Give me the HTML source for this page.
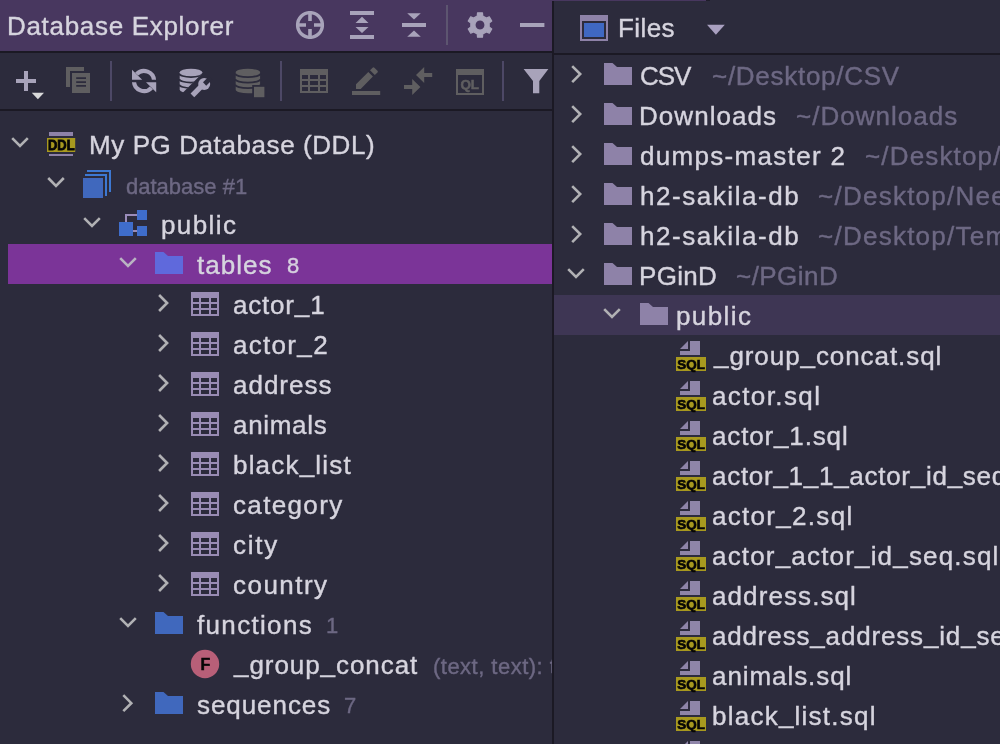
<!DOCTYPE html>
<html><head><meta charset="utf-8"><title>Database Explorer</title>
<style>
html,body{margin:0;padding:0;background:#2c2b3c;}
body{width:1000px;height:744px;position:relative;overflow:hidden;font-family:"Liberation Sans",sans-serif;}
.t i{font-style:normal;position:relative;top:-2px;}
.t{position:absolute;white-space:pre;line-height:40px;height:40px;-webkit-text-stroke:0.4px currentColor;will-change:transform;}
svg text{font-family:"Liberation Sans",sans-serif;}
#left{position:absolute;left:0;top:0;width:552px;height:744px;overflow:hidden;background:#2c2b3c;}
#lhdr{position:absolute;left:0;top:0;width:552px;height:51px;background:#48375f;}
#topstrip{position:absolute;left:0;top:0;width:706px;height:1px;background:#48375f;}
#topstrip2{position:absolute;left:706px;top:0;width:4px;height:1px;background:#1f1d2b;}
.hl{position:absolute;left:0;width:552px;height:2px;background:#1b1924;}
#lsel{position:absolute;left:8px;top:244px;width:544px;height:40px;background:#7b3498;}
#vline{position:absolute;left:552px;top:1px;width:2px;height:743px;background:#1b1924;}
#right{position:absolute;left:554px;top:1px;width:446px;height:743px;overflow:hidden;background:#2c2b3c;}
#rin{position:absolute;left:0;top:-1px;width:446px;height:744px;}
#rsel{position:absolute;left:0;top:295px;width:446px;height:40px;background:#3e3654;}
#rline{position:absolute;left:0;top:53px;width:446px;height:2px;background:#1b1924;}
svg{position:absolute;left:0;top:0;will-change:transform;}
</style></head><body>
<div id="topstrip"></div><div id="topstrip2"></div>
<div id="left">
<div id="lhdr"></div>
<div class="hl" style="top:51px"></div>
<div class="hl" style="top:109px"></div>
<div id="lsel"></div>
<svg width="552" height="744" viewBox="0 0 552 744"><defs><clipPath id="cw"><path d="M170,60 H215.6 L180,95.6 H170 Z"/></clipPath><clipPath id="ct"><rect x="128" y="60" width="32" height="19.7"/></clipPath><clipPath id="cb"><rect x="128" y="82.3" width="32" height="20"/></clipPath></defs><circle cx="310" cy="25" r="12.4" fill="none" stroke="#a8a3ba" stroke-width="3.4"/><path d="M296,25 H306 M314,25 H324 M310,11 V21 M310,29 V39" stroke="#a8a3ba" stroke-width="3.6" fill="none"/><rect x="350" y="11" width="24" height="4" fill="#a8a3ba"/><rect x="350" y="35" width="24" height="4" fill="#a8a3ba"/><path d="M362,16.8 L368.5,23 H355.5 Z M362,33 L368.5,27 H355.5 Z" fill="#a8a3ba"/><rect x="402" y="23" width="24" height="4" fill="#a8a3ba"/><path d="M414,19.6 L420.8,13.2 H407.2 Z M414,30.4 L420.8,36.8 H407.2 Z" fill="#a8a3ba"/><rect x="446" y="5" width="2" height="40" fill="#5d5570"/><path d="M477.25,16.01 L477.53,12.85 L482.47,12.85 L482.75,16.01 L486.41,18.13 L489.29,16.78 L491.76,21.07 L489.16,22.89 L489.16,27.11 L491.76,28.93 L489.29,33.22 L486.41,31.87 L482.75,33.99 L482.47,37.15 L477.53,37.15 L477.25,33.99 L473.59,31.87 L470.71,33.22 L468.24,28.93 L470.84,27.11 L470.84,22.89 L468.24,21.07 L470.71,16.78 L473.59,18.13 Z M485.05,25 A5.05,5.05 0 1,0 474.95,25 A5.05,5.05 0 1,0 485.05,25 Z" fill="#a8a3ba" fill-rule="evenodd" stroke="#a8a3ba" stroke-width="1.2" stroke-linejoin="round"/><rect x="520" y="23" width="24.4" height="4" fill="#a8a3ba"/><rect x="16" y="79" width="20" height="4" fill="#a8a3ba"/><rect x="24" y="71" width="4" height="20" fill="#a8a3ba"/><path d="M31.8,92.8 H44 L37.9,99.2 Z" fill="#d9d9da"/><path d="M66,67 H84 V71 H70 V87 H66 Z" fill="#5f5e60"/><path d="M72,73 H90 V93 H72 Z M76.2,77.2 V79 H86 V77.2 Z M76.2,81.2 V83 H86 V81.2 Z M76.2,85 V86.8 H86 V85 Z" fill="#5f5e60" fill-rule="evenodd"/><rect x="110" y="61" width="2" height="40" fill="#4d4866"/><rect x="280" y="61" width="2" height="40" fill="#4d4866"/><rect x="502" y="61" width="2" height="40" fill="#4d4866"/><path d="M154,81 A10,10 0 0 0 136.6,74.2" fill="none" stroke="#a8a3ba" stroke-width="4.2" clip-path="url(#ct)"/><path d="M134,81 A10,10 0 0 0 151.4,87.8" fill="none" stroke="#a8a3ba" stroke-width="4.2" clip-path="url(#cb)"/><path d="M132,69.8 V79.7 H142.2 Z M156.2,92.2 V82.3 H146 Z" fill="#a8a3ba"/><g clip-path="url(#cw)"><path d="M179.7,72.3 A11.3,3.55 0 0 1 202.3,72.3 V89.8 A11.3,3.55 0 0 1 179.7,89.8 Z" fill="#a8a3ba"/><path d="M179.2,73.5 A11.8,3.55 0 0 0 202.8,73.5" fill="none" stroke="#2c2b3c" stroke-width="1.8"/><path d="M179.2,79.0 A11.8,3.55 0 0 0 202.8,79.0" fill="none" stroke="#2c2b3c" stroke-width="1.8"/><path d="M179.2,84.5 A11.8,3.55 0 0 0 202.8,84.5" fill="none" stroke="#2c2b3c" stroke-width="1.8"/></g><path d="M192.4,95.4 L202.6,85.2" stroke="#a8a3ba" stroke-width="5.2" fill="none"/><circle cx="204.2" cy="84" r="6" fill="#a8a3ba"/><path d="M204.6,84.0 L211,77.6" stroke="#2c2b3c" stroke-width="4.6" fill="none"/><g><path d="M235.70000000000002,72.3 A12.2,3.55 0 0 1 260.1,72.3 V89.8 A12.2,3.55 0 0 1 235.70000000000002,89.8 Z" fill="#5f5e60"/><path d="M235.20000000000002,73.5 A12.7,3.55 0 0 0 260.6,73.5" fill="none" stroke="#2c2b3c" stroke-width="1.8"/><path d="M235.20000000000002,79.0 A12.7,3.55 0 0 0 260.6,79.0" fill="none" stroke="#2c2b3c" stroke-width="1.8"/><path d="M235.20000000000002,84.5 A12.7,3.55 0 0 0 260.6,84.5" fill="none" stroke="#2c2b3c" stroke-width="1.8"/></g><rect x="252.2" y="85" width="14" height="14" fill="#2c2b3c"/><rect x="254" y="86.8" width="10.4" height="10.4" fill="#5f5e60"/><rect x="300" y="69" width="28" height="24" fill="#5f5e60"/><rect x="302" y="75" width="6" height="4" fill="#2c2b3c"/><rect x="302" y="81" width="6" height="4" fill="#2c2b3c"/><rect x="302" y="87" width="6" height="4" fill="#2c2b3c"/><rect x="310" y="75" width="8" height="4" fill="#2c2b3c"/><rect x="310" y="81" width="8" height="4" fill="#2c2b3c"/><rect x="310" y="87" width="8" height="4" fill="#2c2b3c"/><rect x="320" y="75" width="6" height="4" fill="#2c2b3c"/><rect x="320" y="81" width="6" height="4" fill="#2c2b3c"/><rect x="320" y="87" width="6" height="4" fill="#2c2b3c"/><rect x="352" y="91" width="28.2" height="4" fill="#5f5e60"/><path d="M356,89 V84.2 L368.3,72 L372.9,76.6 L360.7,89 Z M370,70.3 L372.6,67.7 Q373.5,66.8 374.4,67.7 L377.5,70.8 Q378.3,71.7 377.5,72.5 L374.8,75.1 Z" fill="#5f5e60"/><path d="M416,75 L424.2,67 V73 H432.2 V77 H424.2 V83 Z M420.4,87 L412.2,79 V85 H404 V89 H412.2 V95 Z" fill="#5f5e60"/><path d="M456,69 H484 V95 H456 Z M458,75 V93 H482 V75 Z" fill="#5f5e60" fill-rule="evenodd"/><text x="460.4" y="88.7" font-size="12.4" font-weight="700" fill="#5f5e60" stroke="#5f5e60" stroke-width="0.5" textLength="18.6" lengthAdjust="spacingAndGlyphs">QL</text><path d="M523.6,69 H548.4 L539.3,81 V93.2 H533 V81 Z" fill="#a8a3ba"/><path d="M12.2,138.2 L20,146.0 L27.8,138.2" fill="none" stroke="#b1b1b4" stroke-width="2.6"/><rect x="49" y="132" width="24" height="4" fill="#8e82a8"/><rect x="49" y="154" width="24" height="2" fill="#8e82a8"/><rect x="47" y="138" width="28.2" height="14" fill="#a8991f"/><text x="48" y="149.7" font-size="13.9" font-weight="700" fill="#060606" stroke="#060606" stroke-width="0.8" textLength="26.6" lengthAdjust="spacingAndGlyphs">DDL</text><path d="M48.2,178.0 L56,185.8 L63.8,178.0" fill="none" stroke="#b1b1b4" stroke-width="2.6"/><rect x="83" y="178" width="20" height="20" fill="#4068bd"/><path d="M85,176 V174 H107 V196 H105 V176 Z M87,172 V170 H111 V192 H109 V172 Z" fill="#3d78d2"/><path d="M84.2,218.2 L92,226.0 L99.8,218.2" fill="none" stroke="#b1b1b4" stroke-width="2.6"/><path d="M126,222 V215 H137 M133,231 H137" fill="none" stroke="#9a8cba" stroke-width="2"/><rect x="119" y="222" width="14" height="14" fill="#3f6dcb"/><rect x="137" y="210" width="10" height="10" fill="#3f6dcb"/><rect x="137" y="226" width="10" height="10" fill="#3f6dcb"/><path d="M120.2,258.20000000000005 L128,266.0 L135.8,258.20000000000005" fill="none" stroke="#b9b3c2" stroke-width="2.6"/><path d="M155,252 H163.5 L168,256 H183 V274 H155 Z" fill="#5f69dc"/><path d="M159.1,295.0 L167.1,303.0 L159.1,311.0" fill="none" stroke="#b1b1b4" stroke-width="2.6"/><rect x="191" y="292" width="28" height="24" fill="#998cb4"/><rect x="193" y="298" width="6" height="4" fill="#2c2b3c"/><rect x="193" y="304" width="6" height="4" fill="#2c2b3c"/><rect x="193" y="310" width="6" height="4" fill="#2c2b3c"/><rect x="201" y="298" width="8" height="4" fill="#2c2b3c"/><rect x="201" y="304" width="8" height="4" fill="#2c2b3c"/><rect x="201" y="310" width="8" height="4" fill="#2c2b3c"/><rect x="211" y="298" width="6" height="4" fill="#2c2b3c"/><rect x="211" y="304" width="6" height="4" fill="#2c2b3c"/><rect x="211" y="310" width="6" height="4" fill="#2c2b3c"/><path d="M159.1,335.0 L167.1,343.0 L159.1,351.0" fill="none" stroke="#b1b1b4" stroke-width="2.6"/><rect x="191" y="332" width="28" height="24" fill="#998cb4"/><rect x="193" y="338" width="6" height="4" fill="#2c2b3c"/><rect x="193" y="344" width="6" height="4" fill="#2c2b3c"/><rect x="193" y="350" width="6" height="4" fill="#2c2b3c"/><rect x="201" y="338" width="8" height="4" fill="#2c2b3c"/><rect x="201" y="344" width="8" height="4" fill="#2c2b3c"/><rect x="201" y="350" width="8" height="4" fill="#2c2b3c"/><rect x="211" y="338" width="6" height="4" fill="#2c2b3c"/><rect x="211" y="344" width="6" height="4" fill="#2c2b3c"/><rect x="211" y="350" width="6" height="4" fill="#2c2b3c"/><path d="M159.1,375.0 L167.1,383.0 L159.1,391.0" fill="none" stroke="#b1b1b4" stroke-width="2.6"/><rect x="191" y="372" width="28" height="24" fill="#998cb4"/><rect x="193" y="378" width="6" height="4" fill="#2c2b3c"/><rect x="193" y="384" width="6" height="4" fill="#2c2b3c"/><rect x="193" y="390" width="6" height="4" fill="#2c2b3c"/><rect x="201" y="378" width="8" height="4" fill="#2c2b3c"/><rect x="201" y="384" width="8" height="4" fill="#2c2b3c"/><rect x="201" y="390" width="8" height="4" fill="#2c2b3c"/><rect x="211" y="378" width="6" height="4" fill="#2c2b3c"/><rect x="211" y="384" width="6" height="4" fill="#2c2b3c"/><rect x="211" y="390" width="6" height="4" fill="#2c2b3c"/><path d="M159.1,415.0 L167.1,423.0 L159.1,431.0" fill="none" stroke="#b1b1b4" stroke-width="2.6"/><rect x="191" y="412" width="28" height="24" fill="#998cb4"/><rect x="193" y="418" width="6" height="4" fill="#2c2b3c"/><rect x="193" y="424" width="6" height="4" fill="#2c2b3c"/><rect x="193" y="430" width="6" height="4" fill="#2c2b3c"/><rect x="201" y="418" width="8" height="4" fill="#2c2b3c"/><rect x="201" y="424" width="8" height="4" fill="#2c2b3c"/><rect x="201" y="430" width="8" height="4" fill="#2c2b3c"/><rect x="211" y="418" width="6" height="4" fill="#2c2b3c"/><rect x="211" y="424" width="6" height="4" fill="#2c2b3c"/><rect x="211" y="430" width="6" height="4" fill="#2c2b3c"/><path d="M159.1,455.0 L167.1,463.0 L159.1,471.0" fill="none" stroke="#b1b1b4" stroke-width="2.6"/><rect x="191" y="452" width="28" height="24" fill="#998cb4"/><rect x="193" y="458" width="6" height="4" fill="#2c2b3c"/><rect x="193" y="464" width="6" height="4" fill="#2c2b3c"/><rect x="193" y="470" width="6" height="4" fill="#2c2b3c"/><rect x="201" y="458" width="8" height="4" fill="#2c2b3c"/><rect x="201" y="464" width="8" height="4" fill="#2c2b3c"/><rect x="201" y="470" width="8" height="4" fill="#2c2b3c"/><rect x="211" y="458" width="6" height="4" fill="#2c2b3c"/><rect x="211" y="464" width="6" height="4" fill="#2c2b3c"/><rect x="211" y="470" width="6" height="4" fill="#2c2b3c"/><path d="M159.1,495.0 L167.1,503.0 L159.1,511.0" fill="none" stroke="#b1b1b4" stroke-width="2.6"/><rect x="191" y="492" width="28" height="24" fill="#998cb4"/><rect x="193" y="498" width="6" height="4" fill="#2c2b3c"/><rect x="193" y="504" width="6" height="4" fill="#2c2b3c"/><rect x="193" y="510" width="6" height="4" fill="#2c2b3c"/><rect x="201" y="498" width="8" height="4" fill="#2c2b3c"/><rect x="201" y="504" width="8" height="4" fill="#2c2b3c"/><rect x="201" y="510" width="8" height="4" fill="#2c2b3c"/><rect x="211" y="498" width="6" height="4" fill="#2c2b3c"/><rect x="211" y="504" width="6" height="4" fill="#2c2b3c"/><rect x="211" y="510" width="6" height="4" fill="#2c2b3c"/><path d="M159.1,535.0 L167.1,543.0 L159.1,551.0" fill="none" stroke="#b1b1b4" stroke-width="2.6"/><rect x="191" y="532" width="28" height="24" fill="#998cb4"/><rect x="193" y="538" width="6" height="4" fill="#2c2b3c"/><rect x="193" y="544" width="6" height="4" fill="#2c2b3c"/><rect x="193" y="550" width="6" height="4" fill="#2c2b3c"/><rect x="201" y="538" width="8" height="4" fill="#2c2b3c"/><rect x="201" y="544" width="8" height="4" fill="#2c2b3c"/><rect x="201" y="550" width="8" height="4" fill="#2c2b3c"/><rect x="211" y="538" width="6" height="4" fill="#2c2b3c"/><rect x="211" y="544" width="6" height="4" fill="#2c2b3c"/><rect x="211" y="550" width="6" height="4" fill="#2c2b3c"/><path d="M159.1,575.0 L167.1,583.0 L159.1,591.0" fill="none" stroke="#b1b1b4" stroke-width="2.6"/><rect x="191" y="572" width="28" height="24" fill="#998cb4"/><rect x="193" y="578" width="6" height="4" fill="#2c2b3c"/><rect x="193" y="584" width="6" height="4" fill="#2c2b3c"/><rect x="193" y="590" width="6" height="4" fill="#2c2b3c"/><rect x="201" y="578" width="8" height="4" fill="#2c2b3c"/><rect x="201" y="584" width="8" height="4" fill="#2c2b3c"/><rect x="201" y="590" width="8" height="4" fill="#2c2b3c"/><rect x="211" y="578" width="6" height="4" fill="#2c2b3c"/><rect x="211" y="584" width="6" height="4" fill="#2c2b3c"/><rect x="211" y="590" width="6" height="4" fill="#2c2b3c"/><path d="M120.2,618.2 L128,626.0 L135.8,618.2" fill="none" stroke="#b1b1b4" stroke-width="2.6"/><path d="M155,612 H163.5 L168,616 H183 V634 H155 Z" fill="#4068bd"/><circle cx="205" cy="664" r="14.2" fill="#b85f78"/><text x="200.4" y="669.9" font-size="16" font-weight="700" fill="#060606" stroke="#060606" stroke-width="0.5">F</text><path d="M123.3,695.2 L131.3,703.2 L123.3,711.2" fill="none" stroke="#b1b1b4" stroke-width="2.6"/><path d="M155,692 H163.5 L168,696 H183 V714 H155 Z" fill="#4068bd"/></svg>
<span class="t" id="t0" style="left:7.30px;top:5.5px;font-size:26px;color:#d6d4de;letter-spacing:0.689px">Database Explorer</span><span class="t" id="t1" style="left:88.50px;top:125px;font-size:26px;color:#d6d4de;letter-spacing:0.586px">My PG Database (DDL)</span><span class="t" id="t2" style="left:125.60px;top:167px;font-size:22px;color:#6d6883;letter-spacing:0.003px">database #1</span><span class="t" id="t3" style="left:161.00px;top:205px;font-size:26px;color:#d6d4de;letter-spacing:1.413px">public</span><span class="t" id="t4" style="left:197.30px;top:245px;font-size:26px;color:#d6d4de;letter-spacing:1.024px">tables</span><span class="t" id="t5" style="left:287.00px;top:246px;font-size:22.01px;color:#d6d1df;letter-spacing:0.000px">8</span><span class="t" id="t6" style="left:232.70px;top:285px;font-size:26px;color:#d6d4de;letter-spacing:0.806px">actor<i>_</i>1</span><span class="t" id="t7" style="left:232.70px;top:325px;font-size:26px;color:#d6d4de;letter-spacing:1.306px">actor<i>_</i>2</span><span class="t" id="t8" style="left:232.70px;top:365px;font-size:26px;color:#d6d4de;letter-spacing:0.984px">address</span><span class="t" id="t9" style="left:232.70px;top:405px;font-size:26px;color:#d6d4de;letter-spacing:0.685px">animals</span><span class="t" id="t10" style="left:232.70px;top:445px;font-size:26px;color:#d6d4de;letter-spacing:1.188px">black<i>_</i>list</span><span class="t" id="t11" style="left:232.70px;top:485px;font-size:26px;color:#d6d4de;letter-spacing:1.354px">category</span><span class="t" id="t12" style="left:232.70px;top:525px;font-size:26px;color:#d6d4de;letter-spacing:1.767px">city</span><span class="t" id="t13" style="left:232.70px;top:565px;font-size:26px;color:#d6d4de;letter-spacing:1.473px">country</span><span class="t" id="t14" style="left:197.40px;top:605px;font-size:26px;color:#d6d4de;letter-spacing:1.330px">functions</span><span class="t" id="t15" style="left:325.60px;top:606px;font-size:22.01px;color:#6d6883;letter-spacing:0.000px">1</span><span class="t" id="t16" style="left:233.50px;top:645px;font-size:26px;color:#d6d4de;letter-spacing:0.934px"><i>_</i>group<i>_</i>concat</span><span class="t" id="t17" style="left:433.20px;top:647px;font-size:22px;color:#6d6883;letter-spacing:0.480px">(text, text): text</span><span class="t" id="t18" style="left:197.40px;top:685px;font-size:26px;color:#d6d4de;letter-spacing:0.930px">sequences</span><span class="t" id="t19" style="left:344.40px;top:686px;font-size:22.01px;color:#6d6883;letter-spacing:0.000px">7</span>
</div>
<div id="vline"></div>
<div id="right"><div id="rin">
<div id="rline"></div>
<div id="rsel"></div>
<svg width="446" height="744" viewBox="0 0 446 744"><rect x="26" y="15" width="28" height="26" fill="#8e82a8"/><rect x="28" y="21" width="24" height="18" fill="#2c2b3c"/><rect x="30" y="23" width="20" height="14" fill="#3f68c2"/><path d="M153,24.8 H170.79999999999995 L161.89999999999998,34.8 Z" fill="#a9a0c0"/><path d="M18.200000000000045,66.1 L26.200000000000045,74.1 L18.200000000000045,82.1" fill="none" stroke="#b1b1b4" stroke-width="2.6"/><path d="M50,63 H58.5 L63,67 H78 V85 H50 Z" fill="#8e82a8"/><path d="M18.200000000000045,106.1 L26.200000000000045,114.1 L18.200000000000045,122.1" fill="none" stroke="#b1b1b4" stroke-width="2.6"/><path d="M50,103 H58.5 L63,107 H78 V125 H50 Z" fill="#8e82a8"/><path d="M18.200000000000045,146.1 L26.200000000000045,154.1 L18.200000000000045,162.1" fill="none" stroke="#b1b1b4" stroke-width="2.6"/><path d="M50,143 H58.5 L63,147 H78 V165 H50 Z" fill="#8e82a8"/><path d="M18.200000000000045,186.1 L26.200000000000045,194.1 L18.200000000000045,202.1" fill="none" stroke="#b1b1b4" stroke-width="2.6"/><path d="M50,183 H58.5 L63,187 H78 V205 H50 Z" fill="#8e82a8"/><path d="M18.200000000000045,226.1 L26.200000000000045,234.1 L18.200000000000045,242.1" fill="none" stroke="#b1b1b4" stroke-width="2.6"/><path d="M50,223 H58.5 L63,227 H78 V245 H50 Z" fill="#8e82a8"/><path d="M14.2,269.20000000000005 L22,277.0 L29.8,269.20000000000005" fill="none" stroke="#b1b1b4" stroke-width="2.6"/><path d="M50,263 H58.5 L63,267 H78 V285 H50 Z" fill="#8e82a8"/><path d="M50.2,309.20000000000005 L58,317.0 L65.8,309.20000000000005" fill="none" stroke="#b1b1b4" stroke-width="2.6"/><path d="M86,303 H94.5 L99,307 H114 V325 H86 Z" fill="#8e82a8"/><path d="M136,341 H146 V355 H126 V351 H136 Z" fill="#8f85a9"/><path d="M134,341 V349 H126 Z" fill="#8f85a9"/><rect x="122" y="357" width="30" height="14" fill="#a8991f"/><text x="123.3" y="368.5" font-size="13" font-weight="700" fill="#060606" stroke="#060606" stroke-width="0.65" textLength="27.6" lengthAdjust="spacingAndGlyphs">SQL</text><path d="M136,381 H146 V395 H126 V391 H136 Z" fill="#8f85a9"/><path d="M134,381 V389 H126 Z" fill="#8f85a9"/><rect x="122" y="397" width="30" height="14" fill="#a8991f"/><text x="123.3" y="408.5" font-size="13" font-weight="700" fill="#060606" stroke="#060606" stroke-width="0.65" textLength="27.6" lengthAdjust="spacingAndGlyphs">SQL</text><path d="M136,421 H146 V435 H126 V431 H136 Z" fill="#8f85a9"/><path d="M134,421 V429 H126 Z" fill="#8f85a9"/><rect x="122" y="437" width="30" height="14" fill="#a8991f"/><text x="123.3" y="448.5" font-size="13" font-weight="700" fill="#060606" stroke="#060606" stroke-width="0.65" textLength="27.6" lengthAdjust="spacingAndGlyphs">SQL</text><path d="M136,461 H146 V475 H126 V471 H136 Z" fill="#8f85a9"/><path d="M134,461 V469 H126 Z" fill="#8f85a9"/><rect x="122" y="477" width="30" height="14" fill="#a8991f"/><text x="123.3" y="488.5" font-size="13" font-weight="700" fill="#060606" stroke="#060606" stroke-width="0.65" textLength="27.6" lengthAdjust="spacingAndGlyphs">SQL</text><path d="M136,501 H146 V515 H126 V511 H136 Z" fill="#8f85a9"/><path d="M134,501 V509 H126 Z" fill="#8f85a9"/><rect x="122" y="517" width="30" height="14" fill="#a8991f"/><text x="123.3" y="528.5" font-size="13" font-weight="700" fill="#060606" stroke="#060606" stroke-width="0.65" textLength="27.6" lengthAdjust="spacingAndGlyphs">SQL</text><path d="M136,541 H146 V555 H126 V551 H136 Z" fill="#8f85a9"/><path d="M134,541 V549 H126 Z" fill="#8f85a9"/><rect x="122" y="557" width="30" height="14" fill="#a8991f"/><text x="123.3" y="568.5" font-size="13" font-weight="700" fill="#060606" stroke="#060606" stroke-width="0.65" textLength="27.6" lengthAdjust="spacingAndGlyphs">SQL</text><path d="M136,581 H146 V595 H126 V591 H136 Z" fill="#8f85a9"/><path d="M134,581 V589 H126 Z" fill="#8f85a9"/><rect x="122" y="597" width="30" height="14" fill="#a8991f"/><text x="123.3" y="608.5" font-size="13" font-weight="700" fill="#060606" stroke="#060606" stroke-width="0.65" textLength="27.6" lengthAdjust="spacingAndGlyphs">SQL</text><path d="M136,621 H146 V635 H126 V631 H136 Z" fill="#8f85a9"/><path d="M134,621 V629 H126 Z" fill="#8f85a9"/><rect x="122" y="637" width="30" height="14" fill="#a8991f"/><text x="123.3" y="648.5" font-size="13" font-weight="700" fill="#060606" stroke="#060606" stroke-width="0.65" textLength="27.6" lengthAdjust="spacingAndGlyphs">SQL</text><path d="M136,661 H146 V675 H126 V671 H136 Z" fill="#8f85a9"/><path d="M134,661 V669 H126 Z" fill="#8f85a9"/><rect x="122" y="677" width="30" height="14" fill="#a8991f"/><text x="123.3" y="688.5" font-size="13" font-weight="700" fill="#060606" stroke="#060606" stroke-width="0.65" textLength="27.6" lengthAdjust="spacingAndGlyphs">SQL</text><path d="M136,701 H146 V715 H126 V711 H136 Z" fill="#8f85a9"/><path d="M134,701 V709 H126 Z" fill="#8f85a9"/><rect x="122" y="717" width="30" height="14" fill="#a8991f"/><text x="123.3" y="728.5" font-size="13" font-weight="700" fill="#060606" stroke="#060606" stroke-width="0.65" textLength="27.6" lengthAdjust="spacingAndGlyphs">SQL</text><path d="M136,741 H146 V755 H126 V751 H136 Z" fill="#8f85a9"/><path d="M134,741 V749 H126 Z" fill="#8f85a9"/><rect x="122" y="757" width="30" height="14" fill="#a8991f"/><text x="123.3" y="768.5" font-size="13" font-weight="700" fill="#060606" stroke="#060606" stroke-width="0.65" textLength="27.6" lengthAdjust="spacingAndGlyphs">SQL</text></svg>
<span class="t" id="t20" style="left:64.00px;top:8px;font-size:26px;color:#d6d4de;letter-spacing:0.401px">Files</span><span class="t" id="t21" style="left:86.10px;top:56px;font-size:26px;color:#d6d4de;letter-spacing:-1.109px">CSV</span><span class="t" id="t22" style="left:158.20px;top:56px;font-size:26px;color:#6d6883;letter-spacing:0.723px">~/Desktop/CSV</span><span class="t" id="t23" style="left:85.10px;top:96px;font-size:26px;color:#d6d4de;letter-spacing:1.046px">Downloads</span><span class="t" id="t24" style="left:242.20px;top:96px;font-size:26px;color:#6d6883;letter-spacing:1.016px">~/Downloads</span><span class="t" id="t25" style="left:86.10px;top:136px;font-size:26px;color:#d6d4de;letter-spacing:1.317px">dumps-master 2</span><span class="t" id="t26" style="left:310.70px;top:136px;font-size:26px;color:#6d6883;letter-spacing:1.150px">~/Desktop/dumps</span><span class="t" id="t27" style="left:86.10px;top:176px;font-size:26px;color:#d6d4de;letter-spacing:1.548px">h2-sakila-db</span><span class="t" id="t28" style="left:264.40px;top:176px;font-size:26px;color:#6d6883;letter-spacing:1.250px">~/Desktop/Needed</span><span class="t" id="t29" style="left:86.10px;top:216px;font-size:26px;color:#d6d4de;letter-spacing:1.548px">h2-sakila-db</span><span class="t" id="t30" style="left:264.40px;top:216px;font-size:26px;color:#6d6883;letter-spacing:1.250px">~/Desktop/Temp</span><span class="t" id="t31" style="left:85.10px;top:256px;font-size:26px;color:#d6d4de;letter-spacing:0.325px">PGinD</span><span class="t" id="t32" style="left:182.30px;top:256px;font-size:26px;color:#6d6883;letter-spacing:0.449px">~/PGinD</span><span class="t" id="t33" style="left:122.00px;top:296px;font-size:26px;color:#d6d4de;letter-spacing:1.413px">public</span><span class="t" id="t34" style="left:159.50px;top:336px;font-size:26px;color:#d6d4de;letter-spacing:0.925px"><i>_</i>group<i>_</i>concat.sql</span><span class="t" id="t35" style="left:157.50px;top:376px;font-size:26px;color:#d6d4de;letter-spacing:1.394px">actor.sql</span><span class="t" id="t36" style="left:157.50px;top:416px;font-size:26px;color:#d6d4de;letter-spacing:0.849px">actor<i>_</i>1.sql</span><span class="t" id="t37" style="left:157.50px;top:456px;font-size:26px;color:#d6d4de;letter-spacing:0.720px">actor<i>_</i>1<i>_</i>1<i>_</i>actor<i>_</i>id<i>_</i>seq.sql</span><span class="t" id="t38" style="left:157.50px;top:496px;font-size:26px;color:#d6d4de;letter-spacing:1.299px">actor<i>_</i>2.sql</span><span class="t" id="t39" style="left:157.50px;top:536px;font-size:26px;color:#d6d4de;letter-spacing:1.175px">actor<i>_</i>actor<i>_</i>id<i>_</i>seq.sql</span><span class="t" id="t40" style="left:157.50px;top:576px;font-size:26px;color:#d6d4de;letter-spacing:1.092px">address.sql</span><span class="t" id="t41" style="left:157.50px;top:616px;font-size:26px;color:#d6d4de;letter-spacing:0.830px">address<i>_</i>address<i>_</i>id<i>_</i>seq.sql</span><span class="t" id="t42" style="left:157.50px;top:656px;font-size:26px;color:#d6d4de;letter-spacing:0.933px">animals.sql</span><span class="t" id="t43" style="left:157.50px;top:696px;font-size:26px;color:#d6d4de;letter-spacing:1.237px">black<i>_</i>list.sql</span>
</div></div>
</body></html>
